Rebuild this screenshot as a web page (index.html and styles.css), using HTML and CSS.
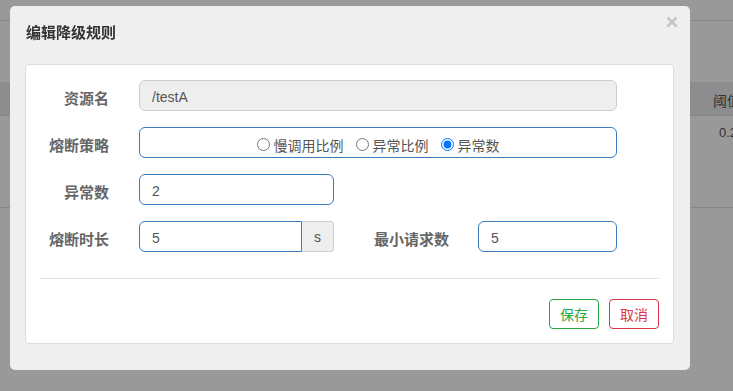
FILE: index.html
```html
<!DOCTYPE html>
<html lang="zh-CN">
<head>
<meta charset="utf-8">
<title>编辑降级规则</title>
<link rel="stylesheet" href="styles.css">
</head>
<body>
<div class="page">
  <div class="topbar"></div>
  <div class="table">
    <div class="thead"><span class="th">阈值</span></div>
    <div class="trow"><span class="td">0.2</span></div>
  </div>
</div>
<div class="backdrop"></div>
<div class="modal">
  <div class="modal-header">
    <h4 class="modal-title">编辑降级规则</h4>
    <button class="close" type="button" aria-label="关闭">
      <svg width="12" height="12" viewBox="0 0 12 12"><path d="M1.5 1.5 L10.5 10.5 M10.5 1.5 L1.5 10.5" stroke="#c6c6c6" stroke-width="2.6" stroke-linecap="butt"/></svg>
    </button>
  </div>
  <div class="modal-body">
    <div class="card">
      <div class="row">
        <label class="lbl">资源名</label>
        <div class="field readonly wide">/testA</div>
      </div>
      <div class="row">
        <label class="lbl">熔断策略</label>
        <div class="field focus wide radios">
          <label class="opt"><input type="radio" name="g">慢调用比例</label>
          <label class="opt"><input type="radio" name="g">异常比例</label>
          <label class="opt"><input type="radio" name="g" checked>异常数</label>
        </div>
      </div>
      <div class="row">
        <label class="lbl">异常数</label>
        <div class="field focus half">2</div>
      </div>
      <div class="row">
        <label class="lbl">熔断时长</label>
        <div class="group">
          <div class="field focus left">5</div>
          <div class="addon">s</div>
        </div>
        <label class="lbl lbl2">最小请求数</label>
        <div class="field focus small">5</div>
      </div>
      <hr class="sep">
      <div class="actions">
        <button class="btn save" type="button">保存</button>
        <button class="btn cancel" type="button">取消</button>
      </div>
    </div>
  </div>
</div>
</body>
</html>
```
FILE: styles.css
```css
* { box-sizing: border-box; }
html, body {
  margin: 0;
  padding: 0;
  width: 733px;
  height: 391px;
  overflow: hidden;
  background: #fff;
  font-family: "Liberation Sans", "Noto Sans CJK SC", sans-serif;
  font-size: 14px;
  color: #555;
}

/* page behind the modal */
.page { width: 733px; height: 391px; }
.topbar { height: 21px; border-bottom: 1px solid #e0e0e0; }
.table { margin-top: 61px; }
.thead {
  height: 34px;
  background: #e9ebed;
  border-bottom: 1px solid #e0e0e0;
  display: flex;
  align-items: center;
  padding-left: 713px;
  white-space: nowrap;
}
.th { color: #555; font-size: 14px; padding-top: 2px; }
.trow {
  height: 92px;
  border-bottom: 1px solid #e0e0e0;
  padding-left: 719px;
  padding-top: 8px;
  white-space: nowrap;
}
.td { color: #555; font-size: 13px; }

.backdrop {
  position: fixed;
  inset: 0;
  background: rgba(0, 0, 0, 0.4);
}

/* modal */
.modal {
  position: fixed;
  left: 10px;
  top: 6px;
  width: 680px;
  height: 364px;
  background: #efefef;
  border-radius: 5px;
}
.modal-header {
  position: relative;
  padding: 15px 16px 0;
  height: 39px;
}
.modal-title {
  margin: 0;
  font-size: 15px;
  line-height: 24px;
  font-weight: bold;
  color: #333;
}
.close {
  position: absolute;
  right: 12px;
  top: 10px;
  width: 12px;
  height: 12px;
  padding: 0;
  border: 0;
  background: none;
  display: flex;
}
.modal-body { padding: 19px 16px 26px 15px; }

.card {
  background: #fff;
  border: 1px solid #ddd;
  border-radius: 4px;
  padding: 15px 14px 14px;
  height: 280px;
}
.row {
  display: flex;
  height: 31px;
  margin-bottom: 16px;
}
.row:last-of-type { margin-bottom: 0; }
.lbl {
  width: 69px;
  margin-right: 30px;
  text-align: right;
  font-weight: bold;
  font-size: 15px;
  color: #666;
  display: flex;
  align-items: center;
  justify-content: flex-end;
  padding-top: 4px;
  white-space: nowrap;
}
.lbl2 { width: 115px; margin-right: 29px; }

.field {
  height: 31px;
  border: 1px solid #ccc;
  border-radius: 6px;
  padding: 3px 12px 0;
  display: flex;
  align-items: center;
  color: #555;
  font-size: 14px;
  background: #fff;
}
.readonly { background: #eee; }
.focus { border-color: #3a7bbd; }
.wide { width: 478px; }
.half { width: 195px; }
.small { width: 139px; }
.group { display: flex; width: 195px; }
.left { width: 163px; border-radius: 6px 0 0 6px; }
.addon {
  width: 32px;
  height: 31px;
  background: #eee;
  border: 1px solid #ccc;
  border-left: 0;
  border-radius: 0 4px 4px 0;
  display: flex;
  align-items: center;
  justify-content: center;
  color: #555;
  font-size: 14px;
  padding-top: 1px;
}

.radios {
  justify-content: center;
  padding: 4px 0 0;
}
.opt {
  display: flex;
  align-items: center;
  margin-right: 12px;
  color: #555;
  font-size: 14px;
  white-space: nowrap;
}
.opt:last-child { margin-right: 0; }
.opt input {
  margin: 0 4px 0 0;
  width: 13px;
  height: 13px;
}

.sep {
  margin: 26px 0 0;
  border: 0;
  border-top: 1px solid #e5e5e5;
  height: 0;
}
.actions {
  display: flex;
  justify-content: flex-end;
  gap: 10px;
  margin-top: 20px;
}
.btn {
  width: 50px;
  height: 30px;
  border-radius: 4px;
  background: #fff;
  font-family: "Liberation Sans", "Noto Sans CJK SC", sans-serif;
  font-size: 14px;
  padding: 0;
}
.save { border: 1px solid #28a745; color: #28a745; }
.cancel { border: 1px solid #dc3545; color: #dc3545; }
```
